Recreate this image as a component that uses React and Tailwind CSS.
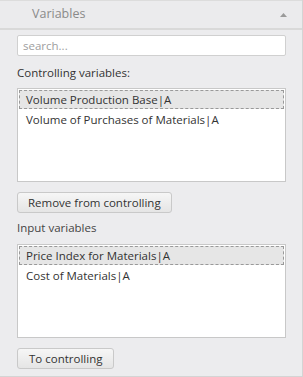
export default function App() {
  const font = { fontFamily: '"Open Sans", "Liberation Sans", sans-serif' };
  return (
    <div className="w-[303px] h-[377px] bg-[#ececee] border-r border-b border-[#d4d4d4] flex flex-col text-[11.5px] text-[#333]" style={font}>
      <div className="h-[30px] shrink-0 flex items-center justify-between pl-[32px] pr-[15px] border-b-2 border-[#d9d9d9] bg-[#ebebed] border-t border-t-[#dcdcdc]">
        <span className="text-[#8a8a8a] text-[12.5px]">Variables</span>
        <svg width="7" height="4" viewBox="0 0 7 4"><path d="M0 4 L3.5 0 L7 4 Z" fill="#9a9a9a" /></svg>
      </div>
      <div className="px-[17px] pr-[16px] flex flex-col">
        <input
          className="mt-[5px] h-[21px] w-full bg-white border border-[#d0d0d0] rounded-[2px] px-[5px] text-[11.5px] outline-none placeholder:text-[#9e9e9e]"
          placeholder="search..."
          style={font}
        />
        <div className="mt-[9px] leading-[16px]">Controlling variables:</div>
        <div className="mt-[7px] h-[94px] bg-white border border-[#c8c8c8] p-[1px]">
          <div className="h-[19px] flex items-center px-[6px] bg-[#e6e6e6] border border-dashed border-[#999]">Volume Production Base|A</div>
          <div className="h-[21px] flex items-center px-[7px]">Volume of Purchases of Materials|A</div>
        </div>
        <button className="mt-[10px] self-start h-[21px] px-[10px] border border-[#c9c9c9] rounded-[3px] bg-gradient-to-b from-[#f6f6f6] to-[#e5e5e5] text-[11.5px] text-[#333] leading-none" style={font}>Remove from controlling</button>
        <div className="mt-[7px] leading-[16px] text-[#444]">Input variables</div>
        <div className="mt-[8px] h-[94px] bg-white border border-[#c8c8c8] p-[1px]">
          <div className="h-[19px] flex items-center px-[6px] bg-[#e6e6e6] border border-dashed border-[#999]">Price Index for Materials|A</div>
          <div className="h-[21px] flex items-center px-[7px]">Cost of Materials|A</div>
        </div>
        <button className="mt-[10px] self-start h-[21px] px-[11px] border border-[#c9c9c9] rounded-[3px] bg-gradient-to-b from-[#f6f6f6] to-[#e5e5e5] text-[11.5px] text-[#333] leading-none" style={font}>To controlling</button>
      </div>
    </div>
  );
}
